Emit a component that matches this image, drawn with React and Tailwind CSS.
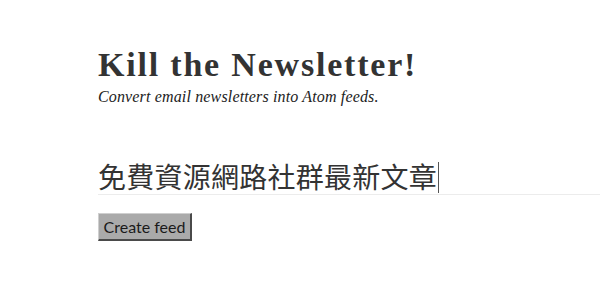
export default function App() {
  return (
    <div className="w-[600px] h-[285px] overflow-hidden bg-white text-[#333]">
      <div className="pl-[98px] pt-[46px]">
        <h1 className="text-[34px] leading-[37px] font-bold font-['Liberation_Serif',serif] text-[#333] tracking-[1.8px]">
          Kill the Newsletter!
        </h1>
        <p className="mt-[4px] text-[16px] leading-[20px] italic font-['Liberation_Serif',serif] text-[#222] tracking-[0.15px]">
          Convert email newsletters into Atom feeds.
        </p>
        <div className="mt-[48px] flex items-end h-[40px] border-b border-[#ececec] w-[520px]">
          <span className="text-[28px] leading-[36px] tracking-[0.25px] font-['Noto_Sans_CJK_TC','Noto_Sans_CJK_SC',sans-serif] text-[#333]">
            免費資源網路社群最新文章
          </span>
          <span className="w-px h-[31px] bg-[#555] mb-[1px] ml-[1px]"></span>
        </div>
        <button className="mt-[18px] h-[28px] w-[94px] bg-[#aaaaaa] border-t border-l border-t-[#cfcfcf] border-l-[#cfcfcf] border-r-2 border-b-2 border-r-[#4a4a4a] border-b-[#4a4a4a] text-[16px] leading-none font-['Lato',sans-serif] text-[#1a1a1a] flex items-center justify-center">
          Create feed
        </button>
      </div>
    </div>
  );
}
